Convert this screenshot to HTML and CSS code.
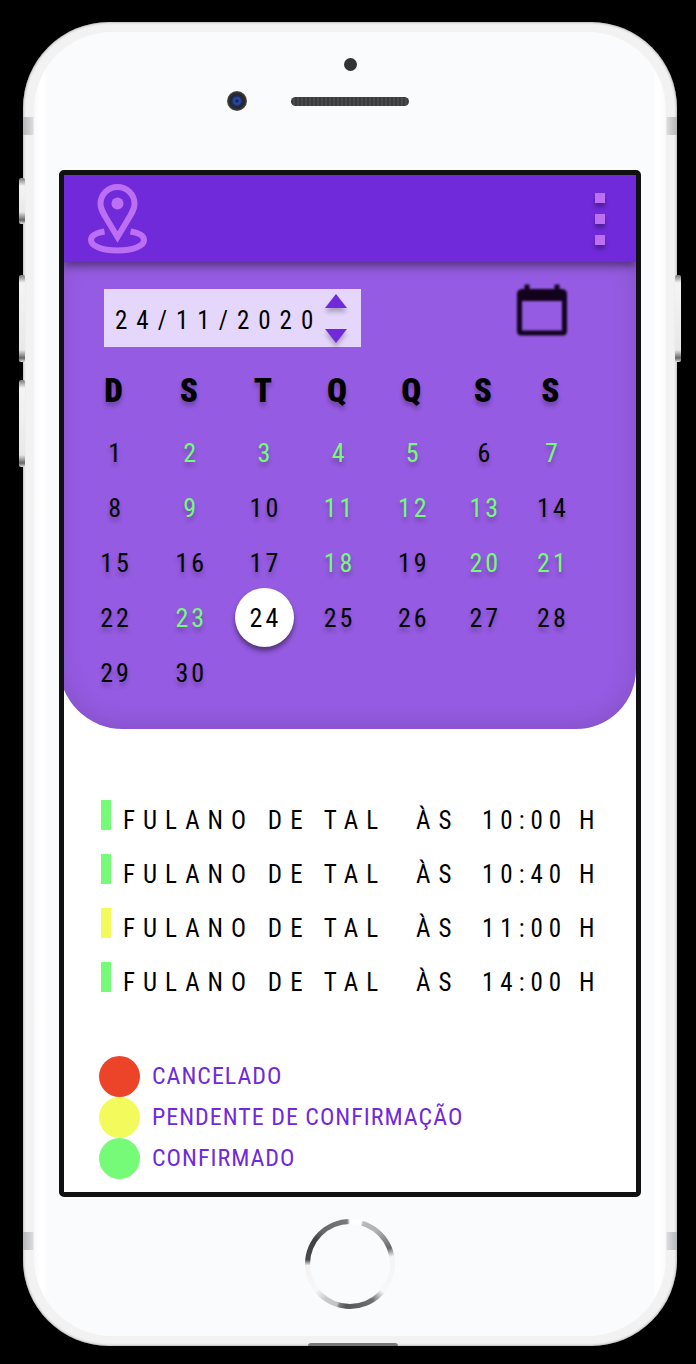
FILE: index.html
```html
<!DOCTYPE html>
<html lang="pt-BR">
<head>
<meta charset="utf-8">
<meta name="viewport" content="width=device-width, initial-scale=1">
<title>Agenda</title>
<link rel="stylesheet" href="styles.css">
</head>
<body>
<div class="phone">
  <span class="side-key side-key-mute"></span>
  <span class="side-key side-key-up"></span>
  <span class="side-key side-key-down"></span>
  <span class="side-key side-key-power"></span>
  <span class="antenna antenna-top"></span>
  <span class="antenna antenna-bottom"></span>
  <span class="port"></span>
  <div class="face">
    <div class="bezel-top">
      <span class="sensor"></span>
      <div class="earpiece">
        <span class="camera"></span>
        <span class="speaker"></span>
      </div>
    </div>

    <div class="screen">
      <header class="app-bar">
        <a class="logo" href="#" aria-label="Início">
          <svg width="60" height="70" viewBox="0 0 60 70" fill="none" stroke="#bc6ff3" stroke-width="6">
            <path d="M29.500 53 L19 35.500 C15 29 12.500 25 12.500 20 A17 17 0 0 1 46.500 20 C46.500 25 44 29 40 35.500 Z"/>
            <circle cx="29.500" cy="19.500" r="6" fill="#bc6ff3" stroke="none"/>
            <path d="M16.500 47.500 C8 49 3 52 3 56 C3 62 14 66.500 29.500 66.500 C45 66.500 56 62 56 56 C56 52 51 49 42.500 47.500"/>
          </svg>
        </a>
        <button class="menu" type="button" aria-label="Menu">
          <span class="menu-dot"></span>
          <span class="menu-dot"></span>
          <span class="menu-dot"></span>
        </button>
      </header>

      <section class="calendar">
        <div class="toolbar">
          <div class="date-field">
            <input class="date-input" type="text" value="24/11/2020" aria-label="Data">
            <div class="stepper">
              <button class="step" type="button" aria-label="Próximo dia">
                <svg width="22" height="14" viewBox="0 0 22 14"><path d="M11 0 L22 14 H0 Z" fill="#702ada"/></svg>
              </button>
              <button class="step" type="button" aria-label="Dia anterior">
                <svg width="22" height="14" viewBox="0 0 22 14"><path d="M0 0 H22 L11 14 Z" fill="#702ada"/></svg>
              </button>
            </div>
          </div>
          <button class="open-calendar" type="button" aria-label="Abrir calendário">
            <svg width="50" height="52" viewBox="0 0 50 52">
              <path fill="#12021c" fill-rule="evenodd" d="M7.500 0.500 H12.500 V5 H37.500 V0.500 H42.500 V5 H45 Q50 5.500 50 10 V47 Q50 51.500 45.500 51.500 H4.500 Q0 51.500 0 47 V10 Q0 5.500 5 5 H7.500 Z M5 17 V46.500 H45 V17 Z"/>
            </svg>
          </button>
        </div>

        <table class="month">
          <colgroup>
            <col class="col-first"><col class="col-mid"><col class="col-mid"><col class="col-mid"><col class="col-mid"><col class="col-fri"><col class="col-last">
          </colgroup>
          <thead>
            <tr><th>D</th><th>S</th><th>T</th><th>Q</th><th>Q</th><th>S</th><th>S</th></tr>
          </thead>
          <tbody>
            <tr>
              <td><button class="day" type="button">1</button></td>
              <td><button class="day busy" type="button">2</button></td>
              <td><button class="day busy" type="button">3</button></td>
              <td><button class="day busy" type="button">4</button></td>
              <td><button class="day busy" type="button">5</button></td>
              <td><button class="day" type="button">6</button></td>
              <td><button class="day busy" type="button">7</button></td>
            </tr>
            <tr>
              <td><button class="day" type="button">8</button></td>
              <td><button class="day busy" type="button">9</button></td>
              <td><button class="day" type="button">10</button></td>
              <td><button class="day busy" type="button">11</button></td>
              <td><button class="day busy" type="button">12</button></td>
              <td><button class="day busy" type="button">13</button></td>
              <td><button class="day" type="button">14</button></td>
            </tr>
            <tr>
              <td><button class="day" type="button">15</button></td>
              <td><button class="day" type="button">16</button></td>
              <td><button class="day" type="button">17</button></td>
              <td><button class="day busy" type="button">18</button></td>
              <td><button class="day" type="button">19</button></td>
              <td><button class="day busy" type="button">20</button></td>
              <td><button class="day busy" type="button">21</button></td>
            </tr>
            <tr>
              <td><button class="day" type="button">22</button></td>
              <td><button class="day busy" type="button">23</button></td>
              <td><button class="day selected" type="button" aria-current="date">24</button></td>
              <td><button class="day" type="button">25</button></td>
              <td><button class="day" type="button">26</button></td>
              <td><button class="day" type="button">27</button></td>
              <td><button class="day" type="button">28</button></td>
            </tr>
            <tr>
              <td><button class="day" type="button">29</button></td>
              <td><button class="day" type="button">30</button></td>
              <td></td><td></td><td></td><td></td><td></td>
            </tr>
          </tbody>
        </table>
      </section>

      <ul class="appointments">
        <li class="appointment"><span class="mark confirmed"></span><span>FULANO DE TAL</span><span>ÀS</span><time>10:00 H</time></li>
        <li class="appointment"><span class="mark confirmed"></span><span>FULANO DE TAL</span><span>ÀS</span><time>10:40 H</time></li>
        <li class="appointment"><span class="mark pending"></span><span>FULANO DE TAL</span><span>ÀS</span><time>11:00 H</time></li>
        <li class="appointment"><span class="mark confirmed"></span><span>FULANO DE TAL</span><span>ÀS</span><time>14:00 H</time></li>
      </ul>

      <ul class="legend">
        <li class="legend-item"><span class="swatch cancelled"></span>CANCELADO</li>
        <li class="legend-item"><span class="swatch pending"></span>PENDENTE DE CONFIRMAÇÃO</li>
        <li class="legend-item"><span class="swatch confirmed"></span>CONFIRMADO</li>
      </ul>
    </div>

    <div class="bezel-bottom">
      <button class="home" type="button" aria-label="Botão de início"><span class="home-face"></span></button>
    </div>
  </div>
</div>
</body>
</html>
```
FILE: styles.css
```css
* { box-sizing: border-box; }

body {
  margin: 0;
  padding: 22px 19px 18px 23px;
  background: #000;
  color: #000;
  font-family: "Roboto Condensed", Roboto, sans-serif;
  font-weight: 450;
}

button {
  margin: 0;
  padding: 0;
  border: 0;
  background: none;
  color: inherit;
  font: inherit;
  cursor: pointer;
}

ul { margin: 0; padding: 0; list-style: none; }
svg { display: block; }

/* Device */
.phone {
  position: relative;
  padding: 10px 11px;
  border-radius: 86px;
  background: #f2f2f2;
  box-shadow: inset 0 0 3px #8c8c8c;
}

.face {
  padding: 0 25px;
  border-radius: 78px;
  background: linear-gradient(90deg, #f8f9fb 0, #fff 6px, #fff 10px, #fafbfd 13px, #fafbfd calc(100% - 13px), #fff calc(100% - 10px), #fff calc(100% - 6px), #f8f9fb 100%);
}

.side-key {
  position: absolute;
  left: -4px;
  width: 6px;
  height: 87px;
  border-radius: 2px;
  background: linear-gradient(#777 0, #f4f4f4 8px, #e8e8ea calc(100% - 12px), #666 calc(100% - 4px), #ddd 100%);
}
.side-key-mute { top: 156px; height: 46px; }
.side-key-up { top: 253px; }
.side-key-down { top: 358px; }
.side-key-power { top: 253px; left: auto; right: -4px; }

.antenna {
  position: absolute;
  left: 0;
  right: 0;
  height: 18px;
  background: linear-gradient(90deg, #b4b6b8, #dcdcde 10px, transparent 11px, transparent calc(100% - 11px), #dcdcde calc(100% - 10px), #b4b6b8);
}
.antenna-top { top: 95px; }
.antenna-bottom { bottom: 96px; }

.port {
  position: absolute;
  bottom: 0;
  left: calc(50% - 42px);
  width: 90px;
  height: 3px;
  border-radius: 3px 3px 0 0;
  background: #777;
}

.bezel-top {
  display: flex;
  flex-direction: column;
  align-items: center;
  gap: 20px;
  height: 138px;
  padding-top: 26px;
}

.sensor {
  width: 13px;
  height: 13px;
  border-radius: 50%;
  background: #333336;
}

.earpiece {
  display: grid;
  grid-template-columns: 1fr auto 1fr;
  align-items: center;
  column-gap: 44px;
  width: 100%;
}

.camera {
  justify-self: end;
  width: 20px;
  height: 20px;
  border-radius: 50%;
  background: radial-gradient(circle, #0a1a4a 0, #2a50a8 3px, #1a2c68 5px, #27282b 6px, #2c2c2e 8px, #555 10px);
}

.speaker {
  width: 118px;
  height: 9px;
  border-radius: 5px;
  background: repeating-linear-gradient(90deg, #3b3b3b 0, #3b3b3b 2px, #4a4a4a 2px, #4a4a4a 4px);
}

.bezel-bottom {
  display: flex;
  justify-content: center;
  height: 139px;
  padding-top: 22px;
}

.home {
  width: 90px;
  height: 90px;
  padding: 5px;
  border-radius: 50%;
  background: conic-gradient(#fff 0deg, #fff 15deg, #b8b9ba 18deg, #b0b1b2 40deg, #66676a 68deg, #f4f4f4 80deg, #f8f8f8 130deg, #707174 148deg, #55565a 185deg, #77787a 194deg, #c4c4c6 198deg, #c9c9cb 215deg, #f8f8f8 232deg, #f4f2f0 268deg, #48494c 276deg, #404144 305deg, #68696c 320deg, #77787a 356deg, #fff 360deg);
}

.home-face {
  display: block;
  height: 100%;
  border-radius: 50%;
  background: #fafbfd;
}

/* Screen */
.screen {
  overflow: hidden;
  border: 5px solid #111;
  border-radius: 5px;
  background: #fff;
}

.app-bar {
  position: relative;
  z-index: 1;
  display: flex;
  align-items: center;
  justify-content: space-between;
  height: 87px;
  padding: 0 31px 0 24px;
  background: #702ada;
  box-shadow: 0 4px 8px rgba(0, 0, 0, 0.4);
}

.menu { display: grid; gap: 11px; }

.menu-dot {
  width: 10px;
  height: 10px;
  background: #bc6ff3;
  box-shadow: 0 4px 4px rgba(0, 0, 0, 0.3);
}

.calendar {
  margin-left: -5px;
  padding: 22px 51px 29px 18px;
  border-radius: 0 0 60px 64px;
  background: #955be2;
  box-shadow: inset 0 -4px 24px rgba(0, 0, 0, 0.12);
}

.toolbar {
  display: flex;
  align-items: flex-start;
  justify-content: space-between;
  height: 71px;
  padding: 0 18px 0 27px;
}

.date-field {
  display: flex;
  align-items: center;
  width: 257px;
  height: 58px;
  margin-top: 5px;
  padding: 0 14px 0 11px;
  background: #e5d6fc;
}

.date-input {
  flex: 1;
  min-width: 0;
  padding: 5px 0 0;
  border: 0;
  background: none;
  color: inherit;
  font-family: inherit;
  font-size: 25px;
  font-weight: inherit;
  letter-spacing: 9px;
}

.stepper { display: grid; gap: 21px; }
.step { filter: drop-shadow(0 4px 2px rgba(0, 0, 0, 0.25)); }

.open-calendar { filter: blur(1px); }

.month {
  width: 100%;
  border-collapse: collapse;
  table-layout: fixed;
  text-shadow: 0 4px 4px rgba(0, 0, 0, 0.25);
}
.col-first { width: 15%; }
.col-mid { width: 14.6%; }
.col-fri { width: 13.6%; }
.col-last { width: 13%; }

.month th {
  height: 70px;
  padding: 0 3px 0 0;
  font-size: 33px;
  font-weight: 900;
}

.month td {
  height: 55px;
  padding: 0;
  text-align: center;
  vertical-align: middle;
}

.day {
  display: grid;
  place-items: center;
  width: 59px;
  height: 55px;
  margin: 0 auto;
  padding-left: 2px;
  font-size: 26px;
  letter-spacing: 3px;
  text-shadow: inherit;
}

.busy { color: #75fb77; }

.selected {
  height: 59px;
  margin: -2px auto;
  border-radius: 50%;
  background: #fff;
  box-shadow: 0 4px 5px rgba(0, 0, 0, 0.45);
  text-shadow: none;
}

.appointments {
  display: grid;
  gap: 24px;
  padding: 71px 24px 64px 37px;
}

.appointment {
  display: grid;
  grid-template-columns: 10px 281px 54px 1fr;
  column-gap: 12px;
  align-items: end;
  font-size: 25px;
  line-height: 18px;
  letter-spacing: 8px;
  white-space: nowrap;
}

.appointment time { letter-spacing: 6px; }

.mark { height: 30px; }

.legend { padding: 0 35px 13px; }

.legend-item {
  display: flex;
  align-items: center;
  gap: 12px;
  color: #702ada;
  font-size: 24px;
  line-height: 41px;
  letter-spacing: 1px;
}

.swatch {
  width: 41px;
  height: 41px;
  border-radius: 50%;
}

.confirmed { background: #75fb77; }
.pending { background: #f2fb5b; }
.cancelled { background: #ec4429; }
```
